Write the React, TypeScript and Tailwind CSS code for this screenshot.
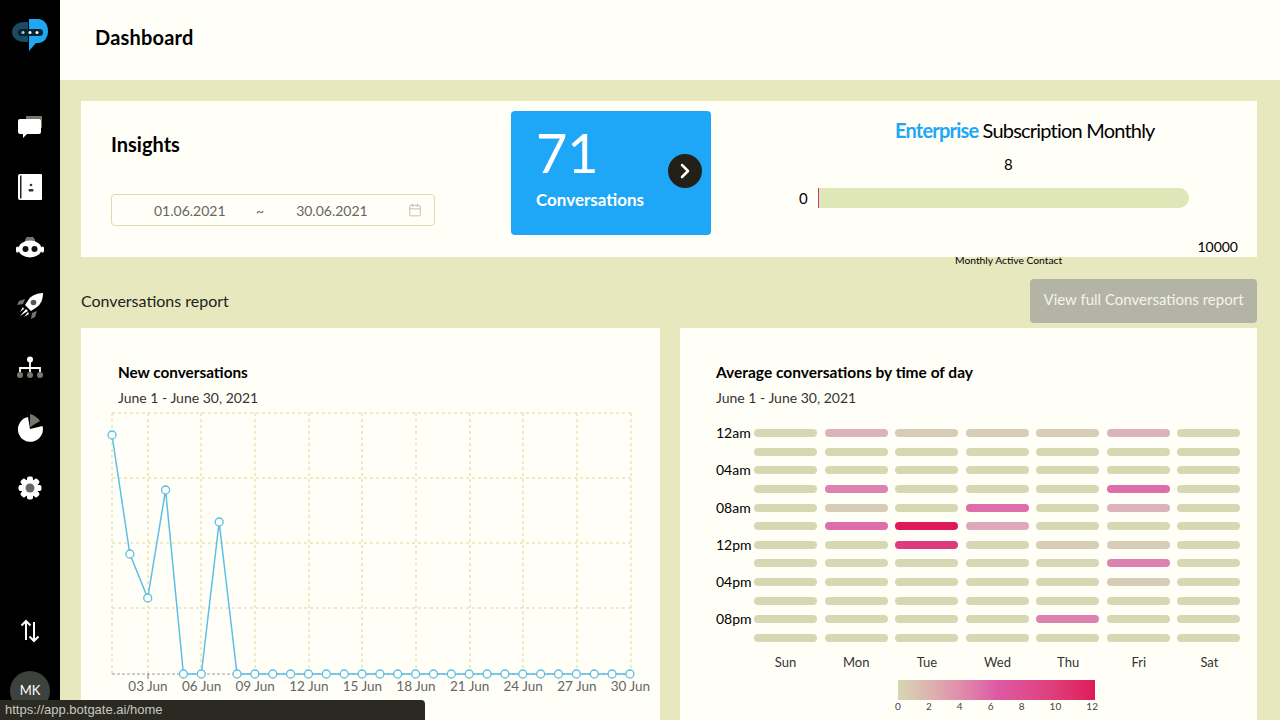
import React from 'react';
import { Calendar, ChevronRight } from 'lucide-react';

const days = ['Sun', 'Mon', 'Tue', 'Wed', 'Thu', 'Fri', 'Sat'];
const hours = ['12am', '', '04am', '', '08am', '', '12pm', '', '04pm', '', '08pm', ''];

// conversations per hour row / weekday
const heat: number[][] = [
  [0, 3, 1, 1, 1, 3, 0],
  [0, 0, 0, 0, 0, 0, 0],
  [0, 0, 0, 0, 0, 0, 0],
  [0, 6, 0, 0, 0, 7, 0],
  [0, 1, 0, 7, 0, 3, 0],
  [0, 7, 12, 4, 0, 0, 0],
  [0, 0, 10, 0, 1, 1, 0],
  [0, 0, 0, 0, 0, 6, 0],
  [0, 0, 0, 0, 0, 1, 0],
  [0, 0, 0, 0, 0, 0, 0],
  [0, 0, 0, 0, 6, 0, 0],
  [0, 0, 0, 0, 0, 0, 0],
];

const heatColor = (v: number) => {
  const stops = [
    [213, 216, 178],
    [220, 168, 188],
    [222, 90, 165],
    [222, 25, 90],
  ];
  const t = (v / 12) * 3;
  const i = Math.min(Math.floor(t), 2);
  const f = t - i;
  const c = stops[i].map((s, n) => Math.round(s + (stops[i + 1][n] - s) * f));
  return `rgb(${c[0]},${c[1]},${c[2]})`;
};

const yValues = [435, 554, 598, 490, 674, 674, 522];
const points = Array.from({ length: 30 }, (_, i) => ({
  x: 112 + i * 17.86,
  y: i < yValues.length ? yValues[i] : 674,
}));
const gridX = [112, 148, 201, 255, 309, 362, 416, 470, 523, 577, 631];
const gridY = [413, 478, 543, 608];
const labels = ['03', '06', '09', '12', '15', '18', '21', '24', '27', '30'];

const Logo = () => (
  <svg width="36" height="34" viewBox="0 0 36 34">
    <path d="M16 3H12C5 3 0 7.500 0 13s5 10 12 10h4z" fill="#1c4a63" />
    <path d="M26 0h-9v32l7-8h2c6 0 10-5 10-12S32 0 26 0z" fill="#1ea7f2" />
    <rect x="6" y="10" width="25" height="7" rx="3.500" fill="#08222e" />
    <circle cx="11" cy="13.500" r="1.500" fill="#8fd4f5" />
    <circle cx="18" cy="13.500" r="1.500" fill="#fff" />
    <circle cx="25" cy="13.500" r="1.500" fill="#fff" />
  </svg>
);

const ChatIcon = () => (
  <svg width="26" height="24" viewBox="0 0 26 24">
    <rect x="9" y="1" width="16" height="12" fill="#77756c" />
    <path d="M3 4h19a2 2 0 0 1 2 2v11a2 2 0 0 1-2 2H10l-4 4v-4H3a2 2 0 0 1-2-2V6a2 2 0 0 1 2-2z" fill="#fff" />
  </svg>
);

const BookIcon = () => (
  <svg width="24" height="26" viewBox="0 0 24 26">
    <path d="M2 0h21a1 1 0 0 1 1 1v24a1 1 0 0 1-1 1H2a2 2 0 0 1-2-2V2a2 2 0 0 1 2-2z" fill="#fff" />
    <rect x="2" y="1.500" width="1.500" height="23" fill="#222" />
    <circle cx="13" cy="11" r="1.300" fill="#333" />
    <rect x="10.500" y="15" width="5" height="2.500" rx="1" fill="#333" />
  </svg>
);

const BotIcon = () => (
  <svg width="28" height="22" viewBox="0 0 28 22">
    <path d="M9 4a5 5 0 0 1 10 0z" fill="#77756c" />
    <ellipse cx="14" cy="12" rx="11.500" ry="8.500" fill="#fff" />
    <rect x="0" y="9.500" width="3" height="6" rx="1.500" fill="#fff" />
    <rect x="25" y="9.500" width="3" height="6" rx="1.500" fill="#fff" />
    <circle cx="9.500" cy="12" r="3" fill="#111" />
    <circle cx="18.500" cy="12" r="3" fill="#111" />
  </svg>
);

const RocketIcon = () => (
  <svg width="26" height="26" viewBox="0 0 26 26">
    <path d="M26 0c-6 .500-11 2-14 6l-4 6 6 6 6-4c4-3 6-8 6-14z" fill="#fff" />
    <circle cx="16.500" cy="9.500" r="2.800" fill="#555" />
    <path d="M8 6L2 8 0 12l6-1z" fill="#77756c" />
    <path d="M20 18l-2 6-4 2 1-6z" fill="#77756c" />
    <path d="M6 14l1 2-4 3zM9 16l2 2-8 5zM11 19l1 2-5 3z" fill="#fff" />
  </svg>
);

const OrgIcon = () => (
  <svg width="26" height="24" viewBox="0 0 26 24">
    <circle cx="13" cy="3.500" r="3" fill="#fff" />
    <path d="M13 6v10M3 16v-4h20v4" stroke="#fff" strokeWidth="1.800" fill="none" />
    <circle cx="3" cy="19" r="3" fill="#77756c" />
    <circle cx="13" cy="19" r="3" fill="#77756c" />
    <circle cx="23" cy="19" r="3" fill="#77756c" />
  </svg>
);

const PieIcon = () => (
  <svg width="26" height="28" viewBox="0 0 26 28">
    <path d="M13 15L11 3A12.500 12.500 0 1 0 25.500 12z" fill="#fff" />
    <path d="M13 0v13l10-6c-2-3-6-6-10-7z" fill="#77756c" />
  </svg>
);

const GearIcon = () => (
  <svg width="24" height="24" viewBox="0 0 24 24">
    {[0, 45, 90, 135].map((a) => (
      <rect key={a} x="9" y="0.500" width="6" height="23" rx="2" fill="#fff" transform={`rotate(${a} 12 12)`} />
    ))}
    <circle cx="12" cy="12" r="8.500" fill="#fff" />
    <circle cx="12" cy="12" r="4.500" fill="#666" />
  </svg>
);

const SwapIcon = () => (
  <svg width="20" height="24" viewBox="0 0 20 24" fill="none" stroke="#fff" strokeWidth="2">
    <path d="M6 21V2M1.500 6.500L6 2l4.500 4.500" />
    <path d="M14 3v19M9.500 17.500L14 22l4.500-4.500" />
  </svg>
);

const App = () => {
  return (
    <div className="flex h-[720px] w-[1280px] overflow-hidden bg-[#e8e8be] font-['Lato',sans-serif] text-black">
      {/* sidebar */}
      <aside className="relative flex h-full w-[60px] shrink-0 flex-col items-center bg-black">
        <div className="mt-[19px] h-[34px]">
          <Logo />
        </div>
        <div className="mt-[62px] flex h-[24px] items-center"><ChatIcon /></div>
        <div className="mt-[35px] flex h-[26px] items-center"><BookIcon /></div>
        <div className="mt-[37px] flex h-[22px] items-center"><BotIcon /></div>
        <div className="mt-[33px] flex h-[28px] items-center"><RocketIcon /></div>
        <div className="mt-[36px] flex h-[24px] items-center"><OrgIcon /></div>
        <div className="mt-[34px] flex h-[28px] items-center"><PieIcon /></div>
        <div className="mt-[34px] flex h-[24px] items-center"><GearIcon /></div>
        <div className="mt-[119px] flex h-[24px] items-center"><SwapIcon /></div>
        <div className="relative mt-[28px] flex h-[40px] w-[40px] shrink-0 items-center justify-center rounded-full bg-[#3e423e] text-[13px] text-white">
          MK
          <span className="absolute bottom-[-3px] right-[-3px] h-3 w-3 rounded-full bg-[#4caf35]" />
        </div>
      </aside>

      <div className="flex min-w-0 flex-1 flex-col">
        <header className="flex h-[80px] shrink-0 items-center bg-[#fffff8] pb-[6px] pl-[35px] text-[20px] font-bold tracking-[0.2px]">
          Dashboard
        </header>

        <main className="flex flex-col pl-[21px] pr-[23px] pt-[21px]">
          {/* insights */}
          <section className="flex h-[156px] shrink-0 bg-[#fffff8]">
            <div className="w-[430px] pl-[30px] pt-[30px]">
              <h2 className="text-[20px] leading-[26px] font-bold">Insights</h2>
              <div className="mt-[37px] flex h-[32px] w-[324px] items-center rounded border border-[#dcdcae] text-[14px] text-[#666]">
                <span className="ml-[42px] w-[70px]">01.06.2021</span>
                <span className="ml-[32px]">~</span>
                <span className="ml-[32px] w-[70px]">30.06.2021</span>
                <Calendar className="ml-[42px] h-[14px] w-[14px] text-[#b8b8a8]" strokeWidth={1.5} />
              </div>
            </div>
            <div className="relative mt-[10px] h-[124px] w-[200px] rounded bg-[#1ea7f6] pl-[25px] text-white">
              <div className="mt-[11px] text-[54px] leading-[62px]">71</div>
              <div className="mt-[5px] text-[17px] leading-[22px] font-bold">Conversations</div>
              <div className="absolute left-[157px] top-[43px] flex h-[34px] w-[34px] items-center justify-center rounded-full bg-[#232018]">
                <ChevronRight className="h-6 w-6" strokeWidth={2.5} />
              </div>
            </div>
            <div className="relative flex-1">
              <h3 className="mt-[16px] pl-[184px] text-[20px] leading-[26px] tracking-[-0.8px]">
                <span className="font-bold text-[#1ea7f6]">Enterprise</span> Subscription Monthly
              </h3>
              <div className="mt-[11px] pl-[293px] text-[15px] leading-[20px]">8</div>
              <div className="mt-[14px] flex h-[20px] items-center">
                <span className="ml-[88px] w-[19px] text-[15px]">0</span>
                <div className="h-[20px] w-[371px] rounded-r-full border-l border-[#c0406a] bg-[#dfe6b8]" />
              </div>
              <div className="absolute right-[19px] top-[136px] text-[14px] leading-[20px]">10000</div>
            </div>
          </section>
          <div className="h-0 pl-[874px] text-[10.300px] leading-[6px] whitespace-nowrap">Monthly Active Contact</div>

          <div className="mt-[22px] flex h-[44px] shrink-0 items-center justify-between">
            <span className="text-[16px] text-[#222]">Conversations report</span>
            <button className="h-[44px] w-[227px] rounded bg-[#b3b3a6] pb-[4px] text-[15px] text-[#f4f4ea]">
              View full Conversations report
            </button>
          </div>

          <div className="mt-[5px] flex gap-[20px]">
            {/* line chart */}
            <section className="relative h-[400px] w-[579px] shrink-0 bg-[#fffff8]">
              <h3 className="pl-[37px] pt-[34px] text-[15.300px] leading-[20px] font-bold">New conversations</h3>
              <p className="mt-[7px] pl-[37px] text-[14px] leading-[18px] text-[#333]">June 1 - June 30, 2021</p>
              <svg className="absolute left-0 top-0" width="579" height="400" viewBox="81 328 579 400">
                {gridY.map((y) => (
                  <line key={y} x1="112" x2="631" y1={y} y2={y} stroke="#d8d890" strokeDasharray="3 3" />
                ))}
                {gridX.map((x) => (
                  <line key={x} x1={x} x2={x} y1="413" y2="674" stroke="#d8d890" strokeDasharray="3 3" />
                ))}
                <line x1="112" x2="631" y1="674" y2="674" stroke="#999" strokeDasharray="3 2" />
                <line x1="148" x2="148" y1="674" y2="679" stroke="#777" />
                <polyline points={points.map((p) => `${p.x},${p.y}`).join(' ')} fill="none" stroke="#5cbfe8" strokeWidth="1.500" />
                {points.map((p) => (
                  <circle key={p.x} cx={p.x} cy={p.y} r="4" fill="#fffff8" stroke="#5cbfe8" strokeWidth="1.300" />
                ))}
                {labels.map((l, i) => (
                  <text key={l} x={148 + i * 53.6} y="691" textAnchor="middle" fontSize="13.500" fill="#666">
                    {l} Jun
                  </text>
                ))}
              </svg>
            </section>

            {/* heatmap */}
            <section className="h-[400px] w-[577px] shrink-0 bg-[#fffff8] pl-[36px]">
              <h3 className="pt-[34px] text-[15.500px] leading-[20px] font-bold">Average conversations by time of day</h3>
              <p className="mt-[7px] text-[14px] leading-[18px] text-[#333]">June 1 - June 30, 2021</p>
              <div className="mt-[22px] flex flex-col gap-[10.640px]">
                {heat.map((row, r) => (
                  <div key={r} className="flex h-[8px] items-center">
                    <span className="w-[38px] whitespace-nowrap text-[14px] leading-[8px]">{hours[r]}</span>
                    <div className="grid grid-cols-7 gap-x-[7.500px]">
                      {row.map((v, c) => (
                        <div key={c} className="h-[8px] w-[63px] rounded-full" style={{ backgroundColor: heatColor(v) }} />
                      ))}
                    </div>
                  </div>
                ))}
              </div>
              <div className="ml-[38px] mt-[11px] grid w-[487px] grid-cols-7 gap-x-[7.500px] text-center text-[13px] leading-[18px] text-[#333]">
                {days.map((d) => (
                  <span key={d}>{d}</span>
                ))}
              </div>
              <div className="ml-[182px] mt-[9px] h-[20px] w-[197px] bg-gradient-to-r from-[#d5d8b2] via-[#de5aa5] to-[#de195a]" />
              <div className="ml-[179px] flex w-[203px] justify-between text-[10px] leading-[12px] text-[#444]">
                {[0, 2, 4, 6, 8, 10, 12].map((n) => (
                  <span key={n}>{n}</span>
                ))}
              </div>
            </section>
          </div>
        </main>
      </div>

      {/* browser link preview */}
      <div className="absolute bottom-0 left-0 flex h-[20px] w-[425px] items-center rounded-tr bg-[#2a2a22] pl-[5px] font-['Liberation_Sans',sans-serif] text-[13px] text-[#c8c8c0]">
        https://app.botgate.ai/home
      </div>
    </div>
  );
};

export default App;
